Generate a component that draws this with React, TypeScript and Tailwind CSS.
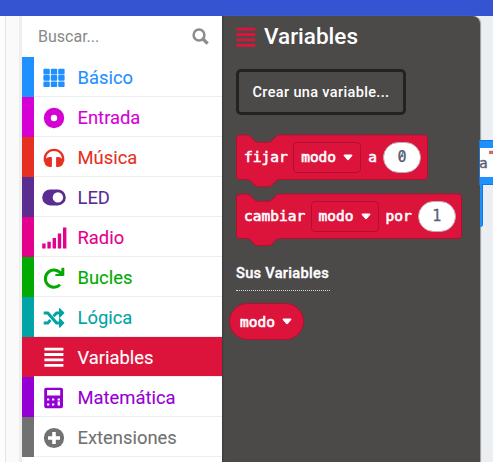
import React from "react";

const roboto = "font-[Roboto,'Liberation_Sans',sans-serif]";
const mono = "font-['DejaVu_Sans_Mono','Liberation_Mono',monospace]";
const blockText = "text-[14.5px] font-normal [-webkit-text-stroke:0.6px_currentColor]";

const GridIcon = () => (
  <svg width="22" height="20" viewBox="0 0 22 20" fill="currentColor">
    {[0, 7.4, 14.8].map((x) =>
      [0.8, 7.1, 13.4].map((y) => <rect key={`${x}-${y}`} x={x + 0.4} y={y} width="6.4" height="5.6" rx="1" />),
    )}
  </svg>
);
const DotIcon = () => (
  <svg width="22" height="22" viewBox="0 0 22 22">
    <circle cx="11" cy="11" r="6.7" fill="none" stroke="currentColor" strokeWidth="7" />
  </svg>
);
const HeadphonesIcon = () => (
  <svg width="22" height="20" viewBox="0 0 22 20" fill="currentColor">
    <path d="M11 .8C5.1.8.7 5.2.7 10.8v1.9c0 .5.3.9.7 1.1.2 2.9 2.4 5.2 5.3 5.2h1.2c.6 0 1-.4 1-1v-8.1c0-.6-.4-1-1-1H6.7c-1.5 0-2.8.7-3.7 1.8C3.2 6.4 6.7 3 11 3s7.8 3.4 8 7.7a4.9 4.9 0 0 0-3.7-1.8h-1.2c-.6 0-1 .4-1 1V18c0 .6.4 1 1 1h1.2c2.9 0 5.1-2.3 5.3-5.2.4-.2.7-.6.7-1.1v-1.9C21.3 5.2 16.9.8 11 .8z" />
  </svg>
);
const ToggleIcon = () => (
  <svg width="24" height="17" viewBox="0 0 24 17">
    <rect x="0.2" y="0.4" width="23.6" height="16" rx="8" fill="currentColor" />
    <circle cx="15.9" cy="8.4" r="5.2" fill="white" />
  </svg>
);
const SignalIcon = () => (
  <svg width="25" height="22" viewBox="0 0 25 22" fill="currentColor">
    <path d="M.2 16.6h3.4v4.8H.2zM5.4 14.8h3.4v6.6H5.4zM10.6 11h3.4v10.4h-3.4zM15.8 6.6h3.4v14.8h-3.4zM21 .6h3.4v20.800H21z" />
  </svg>
);
const RepeatIcon = () => (
  <svg width="22" height="22" viewBox="0 0 22 22" fill="none" stroke="currentColor">
    <path d="M18.2 7A8.6 8.6 0 1 0 17 17.8" strokeWidth="3" />
    <path d="M18.6.7h2.1c.4 0 .6.3.6.6v7c0 .5-.3.8-.8.8h-7.6c-.4 0-.6-.2-.6-.6V7.3l5.6-.5z" fill="currentColor" stroke="none" />
  </svg>
);
const ShuffleIcon = () => (
  <svg width="22" height="20" viewBox="0 0 22 20">
    <g fill="none" stroke="currentColor" strokeWidth="3">
      <path d="M.7 4.9h4.1l8.8 10h4M.7 14.9h4.1l2.7-3M10.5 8.2l3.1-3.3h4" />
    </g>
    <path d="M16 .8c0-.7.7-.9 1.2-.4l3.8 3.8c.4.4.4 1 0 1.4l-3.8 3.8c-.5.5-1.2.2-1.2-.4zM16 10.8c0-.7.7-.9 1.2-.4l3.8 3.8c.4.4.4 1 0 1.4l-3.8 3.8c-.5.5-1.2.2-1.2-.4z" fill="currentColor" />
  </svg>
);
const ListIcon = () => (
  <svg width="20" height="21" viewBox="0 0 20 21" fill="currentColor">
    <path d="M.4.7h19v2.8H.4zM.4 6.1h19v2.8H.4zM.4 11.5h19v2.8H.4zM.4 16.9h19v2.8H.4z" />
  </svg>
);
const CalculatorIcon = () => (
  <svg width="20" height="22" viewBox="0 0 20 22" fill="currentColor" fillRule="evenodd">
    <path d="M2.2.8h14.8c1.2 0 2 .8 2 2v16.4c0 1.2-.8 2-2 2H2.2c-1.2 0-2-.8-2-2V2.8c0-1.2.8-2 2-2zM3 3v5.5h13.2V3zM3 11.400v2.2h2.300v-2.200zm5 0v2.200h2.300v-2.200zm5.600 0v2.200h2.400v-2.200zM3 16.400v2.200h2.300v-2.200zm5 0v2.200h2.300v-2.200zm5.600-1.900v4.100h2.400v-4.100z" />
  </svg>
);
const PlusIcon = () => (
  <svg width="22" height="22" viewBox="0 0 22 22">
    <circle cx="11" cy="11" r="10.1" fill="currentColor" />
    <path d="M11 5v12M5 11h12" stroke="white" strokeWidth="3.6" />
  </svg>
);

const categories = [
  { name: "Básico", text: "text-[#1e90ff]", bar: "bg-[#1e90ff]", Icon: GridIcon },
  { name: "Entrada", text: "text-[#d400d4]", bar: "bg-[#d400d4]", Icon: DotIcon },
  { name: "Música", text: "text-[#e63022]", bar: "bg-[#e63022]", Icon: HeadphonesIcon },
  { name: "LED", text: "text-[#5c2d91]", bar: "bg-[#5c2d91]", Icon: ToggleIcon },
  { name: "Radio", text: "text-[#e3008c]", bar: "bg-[#e3008c]", Icon: SignalIcon },
  { name: "Bucles", text: "text-[#00aa00]", bar: "bg-[#00aa00]", Icon: RepeatIcon },
  { name: "Lógica", text: "text-[#00a4a6]", bar: "bg-[#00a4a6]", Icon: ShuffleIcon },
  { name: "Variables", text: "text-white", bar: "bg-[#dc143c]", Icon: ListIcon, selected: true },
  { name: "Matemática", text: "text-[#9400d3]", bar: "bg-[#9400d3]", Icon: CalculatorIcon },
  { name: "Extensiones", text: "text-[#717171]", bar: "bg-[#717171]", Icon: PlusIcon },
];

const Caret = () => (
  <svg width="10" height="7" viewBox="0 0 10 7" className="shrink-0">
    <path d="M1.6.5h6.8c1 0 1.3.8.7 1.5L6.1 5.6c-.6.7-1.6.7-2.2 0L.9 2C.3 1.3.6.5 1.6.5z" fill="white" />
  </svg>
);

const Dropdown = () => (
  <span className="flex h-[31px] w-[68px] items-center justify-between rounded-[4px] border border-[#b01030] px-[7px]">
    <span className="pt-[2px]">modo</span>
    <Caret />
  </span>
);

function Block({ width, label, joiner, value }: { width: number; label: string; joiner: string; value: string }) {
  const right = width - 4;
  return (
    <div className={`relative h-[54px] text-white ${mono} ${blockText}`} style={{ width }}>
      <svg className="absolute inset-0" width={width} height="54" viewBox={`0 0 ${width} 54`}>
        <path
          d={`M.5 4.5Q.5 1 4 1H11c1.8 0 2.7.9 3.6 1.8l3.6 3.6c.9.9 1.8 1.8 3.6 1.8h10.8c1.8 0 2.7-.9 3.6-1.8l3.6-3.6C40.7 1.9 41.6 1 43.4 1H${right}q3.5 0 3.5 3.5V42q0 3.5-3.5 3.5H43.4c-1.8 0-2.7.9-3.6 1.8l-3.6 3.6c-.9.9-1.8 1.8-3.6 1.8H21.8c-1.8 0-2.7-.9-3.6-1.8l-3.6-3.6c-.9-.9-1.8-1.8-3.6-1.8H4Q.5 45.5.5 42Z`}
          fill="#dc143c"
          stroke="#b01030"
        />
      </svg>
      <div className="relative flex h-[46px] items-center pl-2">
        <span className="pt-[2px]">{label}</span>
        <span className="ml-[5.5px]"><Dropdown /></span>
        <span className="ml-[7px] pt-[2px]">{joiner}</span>
        <span className="ml-[6px] flex h-[31px] w-[38px] items-center justify-center rounded-full border border-[#c2a9af] bg-white pt-px text-[15px] text-[#575e75] [-webkit-text-stroke:0.3px_currentColor]">
          <span className="relative">
            {value}
            {value === "0" && <span className="absolute left-[4px] top-[5px] h-[9px] w-px rotate-[25deg] bg-[#575e75]" />}
          </span>
        </span>
      </div>
    </div>
  );
}

export default function App() {
  return (
    <div className={`flex h-[462px] w-[493px] flex-col overflow-hidden bg-white ${roboto}`}>
      <header className="h-4 shrink-0 bg-[#3454d1]" />
      <main className="flex min-h-0 flex-1">
        <div className="w-[22px] shrink-0 border-r-[3px] border-[#eeeeee] bg-[#fafafa]">
          <div className="h-full w-[6px] border-r border-[#e4e4e6] bg-[#fdfdff]" />
        </div>
        <aside className="w-[200px] shrink-0 bg-white">
          <div className="flex h-[41px] items-center justify-between pl-4 pr-[13px] text-[16px] text-[#888]">
            <span>Buscar...</span>
            <svg width="17" height="17" viewBox="0 0 17 17" fill="none" stroke="#8c8c8c">
              <circle cx="7" cy="7" r="5.4" strokeWidth="2.5" />
              <path d="m11 11 4.7 4.700" strokeWidth="3.200" />
            </svg>
          </div>
          {categories.map(({ name, text, bar, Icon, selected }) => (
            <div key={name} className={`flex h-10 ${text} ${selected ? "bg-[#dc143c]" : ""}`}>
              <div className={`w-3 shrink-0 ${bar}`} />
              <div className="flex flex-1 items-center border-b border-[#ecedef] pt-[2px]">
                <span className="flex w-10 justify-center">
                  <Icon />
                </span>
                <span className="ml-[3.5px] pt-px text-[18.4px] leading-none [-webkit-text-stroke:0.1px_currentColor]">{name}</span>
              </div>
            </div>
          ))}
        </aside>
        <section className="flex flex-1 bg-[#ebeff1]">
          <div className="w-[258px] shrink-0 rounded-tr-[8px] bg-[#4c4949] pl-[14px] shadow-[1px_0_1px_#999,inset_2px_0_2px_-1px_#3c3939]">
            <div className="flex h-[42px] items-center text-[22.5px] font-medium text-white">
              <span className="text-[#dc143c]"><ListIcon /></span>
              <span className="ml-2">Variables</span>
            </div>
            <div className="mt-[11px] flex h-[46px] w-[170px] items-center justify-center rounded-[5px] border-[3px] border-[#232222] pt-px text-[14.5px] font-medium tracking-[0.35px] text-white">
              Crear una variable...
            </div>
            <div className="mt-[19px]"><Block width={192} label="fijar" joiner="a" value="0" /></div>
            <div className="mt-[5px]"><Block width={226} label="cambiar" joiner="por" value="1" /></div>
            <div className="mt-[16px] h-[27px] w-[94px] whitespace-nowrap text-[14.6px] font-medium leading-[20px] tracking-[0.3px] text-white [-webkit-text-stroke:0.35px_currentColor]">
              Sus Variables
            </div>
            <div className="w-[94px] border-t border-dotted border-[#d5d5d5]" />
            <div className={`ml-[-7px] mt-[12px] flex h-[37px] w-[75px] items-center justify-between rounded-full border border-[#b01030] bg-[#dc143c] pl-[10px] pr-[11px] text-white ${mono} ${blockText}`}>
              <span className="pt-[2px]">modo</span>
              <Caret />
            </div>
          </div>
          <div className="flex-1 pt-[125px]">
            <div className="h-[43px] border-y-[7px] border-[#1e90ff] bg-white pt-[5px] shadow-[0_0_0_1px_#1877d3]">
              <div className={`flex items-start text-[14.5px] leading-[20px] text-[#575e75] [-webkit-text-stroke:0.4px_currentColor] ${mono}`}>
                <span className="-ml-px">a</span>
                <span className="-mt-[7px] text-[11px] tracking-[-2px] text-[#c03030]">"</span>
              </div>
            </div>
            <div className="h-[43px] w-[3px] rounded-br-[4px] border-r border-[#1877d3] bg-[#1e90ff]" />
          </div>
        </section>
      </main>
    </div>
  );
}
